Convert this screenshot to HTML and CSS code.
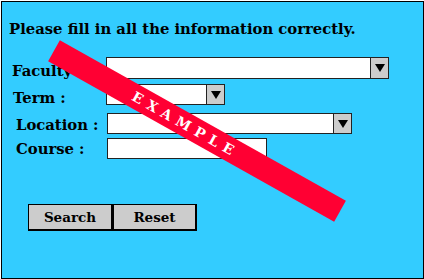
FILE: index.html
```html
<!DOCTYPE html>
<html>
<head>
<meta charset="utf-8">
<link rel="stylesheet" href="styles.css">
</head>
<body>
<div class="frame">
  <h1 class="title">Please fill in all the information correctly.</h1>
  <div class="form">
    <div class="row row-faculty">
      <span class="label">Faculty :</span>
      <div class="select select-faculty"><span class="field"></span><span class="drop"><span class="tri"></span></span></div>
    </div>
    <div class="row row-term">
      <span class="label">Term :</span>
      <div class="select select-term"><span class="field"></span><span class="drop"><span class="tri"></span></span></div>
    </div>
    <div class="row row-location">
      <span class="label">Location :</span>
      <div class="select select-location"><span class="field"></span><span class="drop"><span class="tri"></span></span></div>
    </div>
    <div class="row row-course">
      <span class="label">Course :</span>
      <div class="input"></div>
    </div>
  </div>
  <div class="buttons">
    <button class="btn">Search</button><button class="btn">Reset</button>
  </div>
  <div class="ribbon"><span class="ribbon-text">EXAMPLE</span></div>
</div>
</body>
</html>
```
FILE: styles.css
```css
html, body {
  margin: 0;
  padding: 0;
  background: #ffffff;
}
body {
  font-family: "DejaVu Serif", serif;
}
.frame {
  position: relative;
  margin: 1px 0 0 1px;
  width: 421px;
  height: 276px;
  border: 1px solid #000;
  background: #33ccff;
  overflow: hidden;
}
.title {
  margin: 17px 0 0 7px;
  font-size: 14.8px;
  line-height: 20px;
  font-weight: bold;
  color: #000;
  white-space: nowrap;
}
.form {
  margin-top: 18px;
}
.row {
  display: flex;
  align-items: center;
}
.label {
  font-size: 14.8px;
  font-weight: bold;
  line-height: 20px;
  white-space: nowrap;
  position: relative;
}
.row-faculty { padding-left: 10px; }
.row-faculty .label { width: 94px; top: 3px; }
.row-term { margin-top: 5px; padding-left: 11px; }
.row-term .label { width: 93px; top: 3px; }
.row-location { margin-top: 8px; padding-left: 14px; }
.row-location .label { width: 91px; top: 1px; }
.row-course { margin-top: 4px; padding-left: 14px; }
.row-course .label { width: 91px; top: 0; }

.select {
  display: flex;
  box-sizing: border-box;
  border: 1px solid #222;
  background: #fff;
}
.select .field { flex: 1; }
.drop {
  width: 17px;
  border-left: 1px solid #222;
  background: #cccccc;
  display: flex;
  align-items: center;
  justify-content: center;
}
.tri {
  width: 0;
  height: 0;
  border-left: 5px solid transparent;
  border-right: 5px solid transparent;
  border-top: 8px solid #000;
}
.select-faculty { width: 283px; height: 22px; }
.select-term { width: 119px; height: 21px; }
.select-location { width: 245px; height: 21px; }
.input {
  box-sizing: border-box;
  width: 160px;
  height: 21px;
  border: 1px solid #222;
  background: #fff;
}

.buttons {
  display: flex;
  margin: 45px 0 0 26px;
}
.btn {
  box-sizing: border-box;
  width: 85px;
  height: 27px;
  margin: 0;
  padding: 0;
  border: 1px solid #000;
  border-right-width: 2px;
  border-bottom-width: 2px;
  background: #cccccc;
  font-family: "DejaVu Serif", serif;
  font-size: 13.5px;
  font-weight: bold;
  color: #000;
}
.btn + .btn { width: 84px; }

.ribbon {
  position: absolute;
  left: 31px;
  top: 117px;
  width: 328px;
  height: 24px;
  background: #ff0033;
  transform: rotate(29.3deg);
  display: flex;
  align-items: center;
  justify-content: center;
}
.ribbon-text {
  margin-right: 26px;
  color: #fff;
  font-size: 14px;
  font-weight: bold;
  letter-spacing: 6px;
  line-height: 14px;
}
```
